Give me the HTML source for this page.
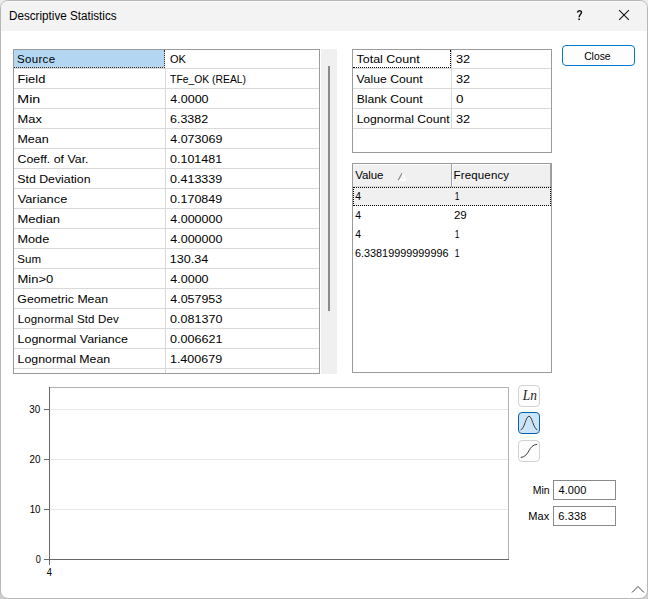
<!DOCTYPE html><html><head><meta charset="utf-8"><title>Descriptive Statistics</title><style>
html,body{margin:0;padding:0;}
body{width:648px;height:599px;overflow:hidden;background:linear-gradient(#ebebeb 0,#ebebeb 50%,#cecece 50%,#cecece 100%);font-family:"Liberation Sans",sans-serif;font-size:12px;color:#000;position:relative;}
.abs{position:absolute;}
#win{position:absolute;left:0;top:0;width:646px;height:597px;border:1px solid #b7b7b7;border-radius:8px;background:#fff;overflow:hidden;}
#title{position:absolute;left:0;top:0;width:646px;height:30px;background:#f3f3f3;}
.t{position:absolute;white-space:nowrap;line-height:14px;height:14px;}
.box{position:absolute;border:1px solid #9b9b9b;box-sizing:border-box;background:#fff;}
.btn{position:absolute;box-sizing:border-box;width:22px;height:22px;border:1px solid #d2d2d2;border-radius:4px;background:#fdfdfd;}
</style></head><body>
<div id="win">
<div id="title"></div>
<div class="abs" style="left:6px;top:0;width:634px;height:1px;background:#f9f9f9;"></div>
<svg class="abs" style="left:573.7px;top:8px" width="10" height="13" viewBox="0 0 10 13"><path d="M2.5 3.6 C2.6 2.3 3.5 1.7 4.5 1.7 C5.8 1.7 6.5 2.5 6.5 3.5 C6.5 5.3 4.15 5.4 4.15 8.2" stroke="#111" stroke-width="1.45" fill="none"/><rect x="3.35" y="9.5" width="1.6" height="1.6" fill="#111"/></svg>
<svg class="abs" style="left:616px;top:7px" width="14" height="14" viewBox="0 0 14 14"><path d="M2.1 2.1 L11.9 11.9 M11.9 2.1 L2.1 11.9" stroke="#111" stroke-width="1.05" fill="none"/></svg>
<div class="abs" style="left:561px;top:44px;width:73px;height:21px;box-sizing:border-box;border:1px solid #0078d4;border-radius:4px;background:#fdfdfd;"></div>
<div class="box" style="left:12px;top:48px;width:307px;height:325px;"></div>
<div class="abs" style="left:13px;top:49px;width:151px;height:18px;background:#b3d7f3;"></div>
<div class="abs" style="left:13px;top:67px;width:305px;height:1px;background:#d9d9d9;"></div>
<div class="abs" style="left:13px;top:87px;width:305px;height:1px;background:#d9d9d9;"></div>
<div class="abs" style="left:13px;top:107px;width:305px;height:1px;background:#d9d9d9;"></div>
<div class="abs" style="left:13px;top:127px;width:305px;height:1px;background:#d9d9d9;"></div>
<div class="abs" style="left:13px;top:147px;width:305px;height:1px;background:#d9d9d9;"></div>
<div class="abs" style="left:13px;top:167px;width:305px;height:1px;background:#d9d9d9;"></div>
<div class="abs" style="left:13px;top:187px;width:305px;height:1px;background:#d9d9d9;"></div>
<div class="abs" style="left:13px;top:207px;width:305px;height:1px;background:#d9d9d9;"></div>
<div class="abs" style="left:13px;top:227px;width:305px;height:1px;background:#d9d9d9;"></div>
<div class="abs" style="left:13px;top:247px;width:305px;height:1px;background:#d9d9d9;"></div>
<div class="abs" style="left:13px;top:267px;width:305px;height:1px;background:#d9d9d9;"></div>
<div class="abs" style="left:13px;top:287px;width:305px;height:1px;background:#d9d9d9;"></div>
<div class="abs" style="left:13px;top:307px;width:305px;height:1px;background:#d9d9d9;"></div>
<div class="abs" style="left:13px;top:327px;width:305px;height:1px;background:#d9d9d9;"></div>
<div class="abs" style="left:13px;top:347px;width:305px;height:1px;background:#d9d9d9;"></div>
<div class="abs" style="left:13px;top:367px;width:305px;height:1px;background:#d9d9d9;"></div>
<div class="abs" style="left:164px;top:49px;width:1px;height:323px;background:#d9d9d9;"></div>
<div class="abs" style="left:13px;top:49px;width:151px;height:18px;box-sizing:border-box;border-right:1px dotted #4c280c;border-bottom:1px dotted #4c280c;"></div>
<div class="abs" style="left:164px;top:49px;width:1px;height:18px;background:#ffffff;"></div>
<div class="abs" style="left:320px;top:48px;width:16px;height:325px;background:#f0f0f0;"></div>
<div class="abs" style="left:327px;top:65px;width:2px;height:245px;background:#8a8a8a;"></div>
<div class="box" style="left:351px;top:48px;width:200px;height:104px;"></div>
<div class="abs" style="left:352px;top:67px;width:198px;height:1px;background:#d9d9d9;"></div>
<div class="abs" style="left:352px;top:87px;width:198px;height:1px;background:#d9d9d9;"></div>
<div class="abs" style="left:352px;top:107px;width:198px;height:1px;background:#d9d9d9;"></div>
<div class="abs" style="left:352px;top:127px;width:198px;height:1px;background:#d9d9d9;"></div>
<div class="abs" style="left:450px;top:49px;width:1px;height:79px;background:#d9d9d9;"></div>
<div class="abs" style="left:352px;top:49px;width:98px;height:18px;border-right:1px dotted #000;border-bottom:1px dotted #000;box-sizing:border-box;"></div>
<div class="box" style="left:351px;top:162px;width:200px;height:210px;"></div>
<div class="abs" style="left:352px;top:163px;width:198px;height:1px;background:#ffffff;"></div>
<div class="abs" style="left:352px;top:164px;width:198px;height:21px;background:#f0f0f0;"></div>
<div class="abs" style="left:352px;top:185px;width:198px;height:1px;background:#d8d8d8;"></div>
<div class="abs" style="left:450px;top:163px;width:1px;height:23px;background:#a0a0a0;"></div>
<div class="abs" style="left:451px;top:163px;width:1px;height:22px;background:#ffffff;"></div>
<div class="abs" style="left:549px;top:163px;width:1px;height:23px;background:#a0a0a0;"></div>
<svg class="abs" style="left:395px;top:170px" width="13" height="12" viewBox="0 0 13 12"><path d="M6 2.2 L9.8 9 L2.2 9" stroke="#fff" stroke-width="1.3" fill="none"/><path d="M2.2 9.3 L6 2.3" stroke="#828282" stroke-width="1.1" fill="none"/></svg>
<div class="abs" style="left:352px;top:186px;width:198px;height:19px;background:#f0f0f0;border:1px dotted #000;box-sizing:border-box;"></div>
<div class="abs" style="left:48px;top:386px;width:460px;height:1px;background:#b2b2b2;"></div>
<div class="abs" style="left:507px;top:386px;width:1px;height:173px;background:#b4b4b4;"></div>
<div class="abs" style="left:49px;top:408px;width:458px;height:1px;background:#e6e6e6;"></div>
<div class="abs" style="left:49px;top:458px;width:458px;height:1px;background:#e6e6e6;"></div>
<div class="abs" style="left:49px;top:508px;width:458px;height:1px;background:#e6e6e6;"></div>
<div class="abs" style="left:48px;top:386px;width:1px;height:178px;background:#686868;"></div>
<div class="abs" style="left:43px;top:558px;width:465px;height:1px;background:#686868;"></div>
<div class="abs" style="left:43px;top:408px;width:5px;height:1px;background:#686868;"></div>
<div class="abs" style="left:43px;top:458px;width:5px;height:1px;background:#686868;"></div>
<div class="abs" style="left:43px;top:508px;width:5px;height:1px;background:#686868;"></div>
<div class="abs" style="left:43px;top:558px;width:5px;height:1px;background:#686868;"></div>
<div class="btn" style="left:517px;top:384px;"></div>
<div class="btn" style="left:517px;top:411px;border-color:#0f5fa8;background:#cce4f7;"></div>
<svg class="abs" style="left:517px;top:411px" width="22" height="22" viewBox="0 0 22 22"><path d="M2.7 17.75 C6.6 16.9 7.8 4.2 10.95 4.2 C14.1 4.2 15.4 16.9 19.3 17.75" stroke="#3c3c3c" stroke-width="1" fill="none"/></svg>
<div class="btn" style="left:517px;top:439px;"></div>
<svg class="abs" style="left:517px;top:439px" width="22" height="22" viewBox="0 0 22 22"><path d="M2.7 17.5 C11.8 16.6 9.9 5.1 19.2 4.3" stroke="#3c3c3c" stroke-width="1" fill="none"/></svg>
<div class="box" style="left:552px;top:479px;width:63px;height:20px;border-color:#8a8a8a;"></div>
<div class="box" style="left:552px;top:505px;width:63px;height:20px;border-color:#8a8a8a;"></div>
<svg class="abs" style="left:630px;top:584px" width="14" height="9" viewBox="0 0 14 9"><path d="M1 7.5 L7 1.5 L13 7.5" stroke="#444" stroke-width="1" fill="none"/></svg>
<div class="t" style="left:8px;top:8px;font-size:12.5px;transform-origin:0 0;transform:translateX(0.05px) scaleX(0.9324);">Descriptive Statistics</div>
<div class="t" style="left:583px;top:48px;font-size:11.5px;transform-origin:0 0;transform:translateX(0.15px) scaleX(0.9000);">Close</div>
<div class="t" style="left:15.98px;top:51px;font-size:11.5px;letter-spacing:0.329px;">Source</div>
<div class="t" style="left:16px;top:71px;font-size:11.5px;transform-origin:0 0;transform:translateX(0.39px) scaleX(1.1195);">Field</div>
<div class="t" style="left:16px;top:91px;font-size:11.5px;transform-origin:0 0;transform:translateX(0.35px) scaleX(1.2365);">Min</div>
<div class="t" style="left:16px;top:111px;font-size:11.5px;transform-origin:0 0;transform:translateX(0.57px) scaleX(1.1176);">Max</div>
<div class="t" style="left:16px;top:131px;font-size:11.5px;transform-origin:0 0;transform:translateX(0.46px) scaleX(1.0851);">Mean</div>
<div class="t" style="left:16px;top:151px;font-size:11.5px;transform-origin:0 0;transform:translateX(0.56px) scaleX(1.0746);">Coeff. of Var.</div>
<div class="t" style="left:16px;top:171px;font-size:11.5px;transform-origin:0 0;transform:translateX(0.24px) scaleX(1.0719);">Std Deviation</div>
<div class="t" style="left:16px;top:191px;font-size:11.5px;transform-origin:0 0;transform:translateX(0.64px) scaleX(1.1145);">Variance</div>
<div class="t" style="left:16px;top:211px;font-size:11.5px;transform-origin:0 0;transform:translateX(0.50px) scaleX(1.1289);">Median</div>
<div class="t" style="left:16px;top:231px;font-size:11.5px;transform-origin:0 0;transform:translateX(0.40px) scaleX(1.1055);">Mode</div>
<div class="t" style="left:16.13px;top:251px;font-size:11.5px;letter-spacing:0.128px;">Sum</div>
<div class="t" style="left:16px;top:271px;font-size:11.5px;transform-origin:0 0;transform:translateX(0.50px) scaleX(1.1305);">Min&gt;0</div>
<div class="t" style="left:16px;top:291px;font-size:11.5px;transform-origin:0 0;transform:translateX(0.34px) scaleX(1.0678);">Geometric Mean</div>
<div class="t" style="left:16.67px;top:311px;font-size:11.5px;letter-spacing:0.169px;">Lognormal Std Dev</div>
<div class="t" style="left:16px;top:331px;font-size:11.5px;transform-origin:0 0;transform:translateX(0.58px) scaleX(1.0810);">Lognormal Variance</div>
<div class="t" style="left:16px;top:351px;font-size:11.5px;transform-origin:0 0;transform:translateX(0.61px) scaleX(1.0725);">Lognormal Mean</div>
<div class="t" style="left:169px;top:51px;font-size:11.5px;transform-origin:0 0;transform:translateX(0.03px) scaleX(0.9562);">OK</div>
<div class="t" style="left:169px;top:71px;font-size:11.5px;transform-origin:0 0;transform:translateX(0.06px) scaleX(0.9010);">TFe_OK (REAL)</div>
<div class="t" style="left:169px;top:91px;font-size:11.5px;transform-origin:0 0;transform:translateX(0.27px) scaleX(1.0883);">4.0000</div>
<div class="t" style="left:168px;top:111px;font-size:11.5px;transform-origin:0 0;transform:translateX(0.99px) scaleX(1.0841);">6.3382</div>
<div class="t" style="left:169px;top:131px;font-size:11.5px;transform-origin:0 0;transform:translateX(0.27px) scaleX(1.0853);">4.073069</div>
<div class="t" style="left:169px;top:151px;font-size:11.5px;transform-origin:0 0;transform:translateX(0.06px) scaleX(1.0842);">0.101481</div>
<div class="t" style="left:169px;top:171px;font-size:11.5px;transform-origin:0 0;transform:translateX(0.06px) scaleX(1.0881);">0.413339</div>
<div class="t" style="left:169px;top:191px;font-size:11.5px;transform-origin:0 0;transform:translateX(0.06px) scaleX(1.0881);">0.170849</div>
<div class="t" style="left:169px;top:211px;font-size:11.5px;transform-origin:0 0;transform:translateX(0.27px) scaleX(1.0867);">4.000000</div>
<div class="t" style="left:169px;top:231px;font-size:11.5px;transform-origin:0 0;transform:translateX(0.27px) scaleX(1.0867);">4.000000</div>
<div class="t" style="left:168px;top:251px;font-size:11.5px;transform-origin:0 0;transform:translateX(0.72px) scaleX(1.0947);">130.34</div>
<div class="t" style="left:169px;top:271px;font-size:11.5px;transform-origin:0 0;transform:translateX(0.27px) scaleX(1.0883);">4.0000</div>
<div class="t" style="left:169px;top:291px;font-size:11.5px;transform-origin:0 0;transform:translateX(0.27px) scaleX(1.0825);">4.057953</div>
<div class="t" style="left:169px;top:311px;font-size:11.5px;transform-origin:0 0;transform:translateX(0.06px) scaleX(1.0910);">0.081370</div>
<div class="t" style="left:169px;top:331px;font-size:11.5px;transform-origin:0 0;transform:translateX(0.06px) scaleX(1.0931);">0.006621</div>
<div class="t" style="left:168px;top:351px;font-size:11.5px;transform-origin:0 0;transform:translateX(0.91px) scaleX(1.0901);">1.400679</div>
<div class="t" style="left:355px;top:51px;font-size:11.5px;transform-origin:0 0;transform:translateX(0.54px) scaleX(1.0838);">Total Count</div>
<div class="t" style="left:454px;top:51px;font-size:11.5px;transform-origin:0 0;transform:translateX(0.90px) scaleX(1.1066);">32</div>
<div class="t" style="left:355px;top:71px;font-size:11.5px;transform-origin:0 0;transform:translateX(0.62px) scaleX(1.0559);">Value Count</div>
<div class="t" style="left:454px;top:71px;font-size:11.5px;transform-origin:0 0;transform:translateX(0.90px) scaleX(1.1066);">32</div>
<div class="t" style="left:355px;top:91px;font-size:11.5px;transform-origin:0 0;transform:translateX(0.65px) scaleX(1.0515);">Blank Count</div>
<div class="t" style="left:454px;top:91px;font-size:11.5px;transform-origin:0 0;transform:translateX(0.92px) scaleX(1.1648);">0</div>
<div class="t" style="left:355px;top:111px;font-size:11.5px;transform-origin:0 0;transform:translateX(0.63px) scaleX(1.0529);">Lognormal Count</div>
<div class="t" style="left:454px;top:111px;font-size:11.5px;transform-origin:0 0;transform:translateX(0.90px) scaleX(1.1066);">32</div>
<div class="t" style="left:354.23px;top:167px;font-size:11.5px;letter-spacing:-0.107px;">Value</div>
<div class="t" style="left:452.58px;top:167px;font-size:11.5px;letter-spacing:0.147px;">Frequency</div>
<div class="t" style="left:354px;top:188px;font-size:11.5px;transform-origin:0 0;transform:translateX(0.25px) scaleX(0.8977);">4</div>
<div class="t" style="left:453px;top:188px;font-size:11.5px;transform-origin:0 0;transform:translateX(0.65px) scaleX(0.7410);">1</div>
<div class="t" style="left:354px;top:207px;font-size:11.5px;transform-origin:0 0;transform:translateX(0.34px) scaleX(0.8977);">4</div>
<div class="t" style="left:453.01px;top:207px;font-size:11.5px;letter-spacing:-0.192px;">29</div>
<div class="t" style="left:354px;top:226px;font-size:11.5px;transform-origin:0 0;transform:translateX(0.34px) scaleX(0.8977);">4</div>
<div class="t" style="left:453px;top:226px;font-size:11.5px;transform-origin:0 0;transform:translateX(0.76px) scaleX(0.7410);">1</div>
<div class="t" style="left:353px;top:245px;font-size:11.5px;transform-origin:0 0;transform:translateX(0.90px) scaleX(0.9446);">6.33819999999996</div>
<div class="t" style="left:453px;top:245px;font-size:11.5px;transform-origin:0 0;transform:translateX(0.76px) scaleX(0.7410);">1</div>
<div class="t" style="left:28px;top:401px;font-size:11px;transform-origin:0 0;transform:translateX(0.36px) scaleX(0.8950);">30</div>
<div class="t" style="left:28px;top:451px;font-size:11px;transform-origin:0 0;transform:translateX(0.52px) scaleX(0.8943);">20</div>
<div class="t" style="left:28px;top:501px;font-size:11px;transform-origin:0 0;transform:translateX(0.63px) scaleX(0.8839);">10</div>
<div class="t" style="left:34px;top:551px;font-size:11px;transform-origin:0 0;transform:translateX(0.73px) scaleX(0.8276);">0</div>
<div class="t" style="left:45px;top:564px;font-size:11px;transform-origin:0 0;transform:translateX(0.76px) scaleX(0.8508);">4</div>
<div class="t" style="left:531px;top:482px;font-size:11px;transform-origin:0 0;transform:translateX(0.76px) scaleX(0.9507);">Min</div>
<div class="t" style="left:527.35px;top:508px;font-size:11px;letter-spacing:0.037px;">Max</div>
<div class="t" style="left:557.50px;top:482px;font-size:11px;letter-spacing:0.077px;">4.000</div>
<div class="t" style="left:557.19px;top:508px;font-size:11px;letter-spacing:0.171px;">6.338</div>
<div class="t" style="left:521px;top:388px;font-family:'Liberation Serif',serif;font-style:italic;font-size:14px;color:#222;transform-origin:0 0;transform:translateX(0.85px) scaleX(0.9571);">Ln</div>
</div></body></html>
